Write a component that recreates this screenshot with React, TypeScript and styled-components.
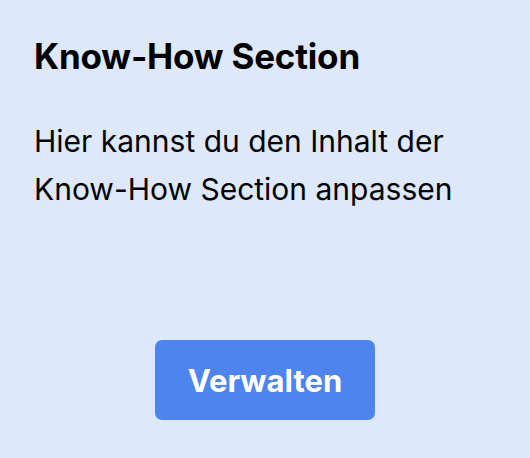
import React from "react";
import styled, { createGlobalStyle } from "styled-components";

const Global = createGlobalStyle`
  html, body { margin: 0; padding: 0; background: #dde8fa; }
  body { font-family: Inter, "Noto Sans", sans-serif; }
`;

const Card = styled.section`
  box-sizing: border-box;
  width: 530px;
  height: 458px;
  background: #dde8fa;
  padding: 34px 34px 0 34px;
  display: flex;
  flex-direction: column;
`;

const Title = styled.h2`
  margin: 0;
  font-size: 35px;
  line-height: 44px;
  font-weight: 700;
  color: #000;
  letter-spacing: -0.2px;
`;

const Body = styled.p`
  margin: 39px 0 0 0;
  font-size: 30px;
  line-height: 48px;
  font-weight: 400;
  color: #000;
`;

const Actions = styled.div`
  display: flex;
  justify-content: center;
  margin-top: 127px;
`;

const Button = styled.button`
  width: 220px;
  height: 80px;
  border: none;
  border-radius: 7px;
  background: #4f83ee;
  color: #fff;
  font-family: Inter, "Noto Sans", sans-serif;
  font-size: 31px;
  font-weight: 700;
  cursor: pointer;
`;

export default function App() {
  return (
    <>
      <Global />
      <Card>
        <Title>Know-How Section</Title>
        <Body>
          Hier kannst du den Inhalt der
          <br />
          Know-How Section anpassen
        </Body>
        <Actions>
          <Button>Verwalten</Button>
        </Actions>
      </Card>
    </>
  );
}
